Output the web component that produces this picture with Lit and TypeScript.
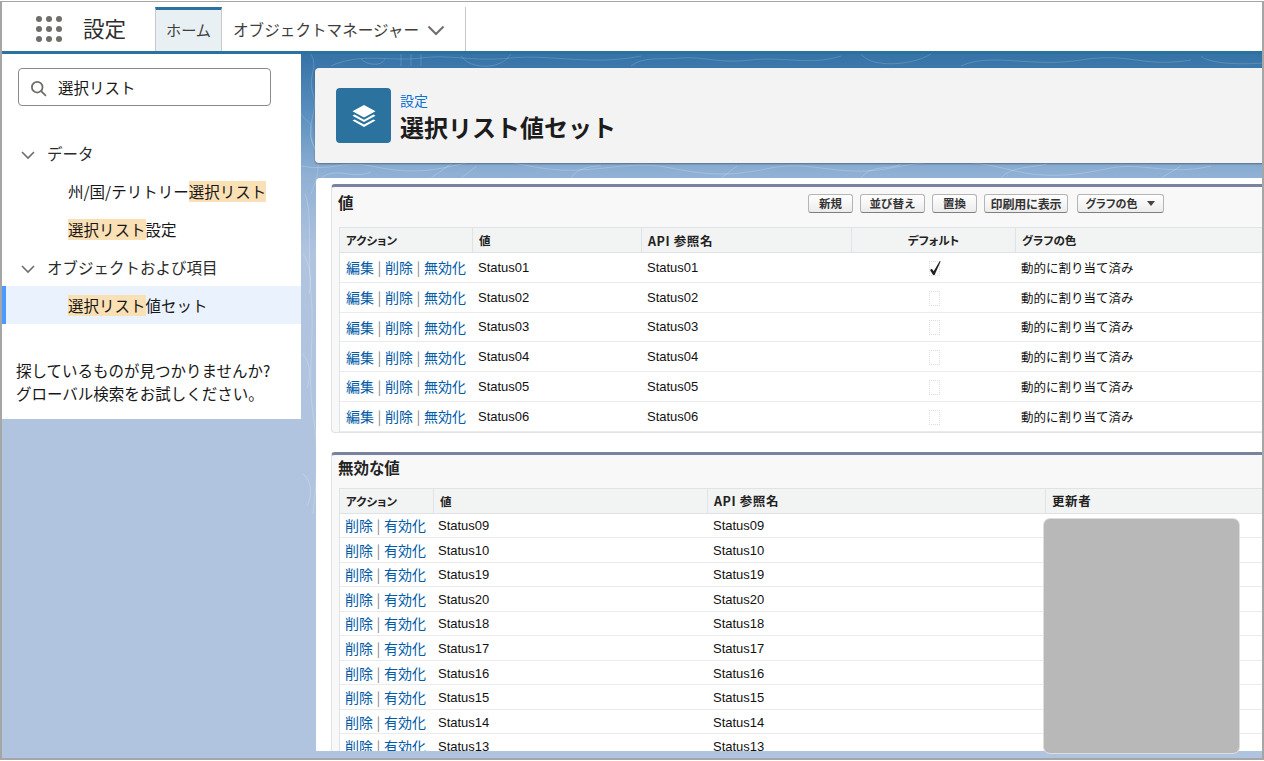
import { LitElement, html, css, svg } from "lit";
import { customElement } from "lit/decorators.js";

const active = ["Status01", "Status02", "Status03", "Status04", "Status05", "Status06"];
const inactive = ["Status09", "Status10", "Status19", "Status20", "Status18", "Status17", "Status16", "Status15", "Status14", "Status13"];

const chev = html`<svg class="chev" viewBox="0 0 16 10" aria-hidden="true"><path d="M2 2l6 6 6-6" fill="none" stroke="currentColor" stroke-width="1.6"/></svg>`;

const topo = svg`
  <g fill="none" stroke="#fff" stroke-opacity=".16" stroke-width="1">
    <path d="M10 0c8 14-4 22 2 40s-8 30 0 50 6 30-2 50"/>
    <path d="M30 12c30-14 60-4 90-8s50 4 90 0 80 8 130-2"/>
    <path d="M60 5c6 6 20 8 24 0M100 0v12M110 0v12M120 0v12M160 2c10 14 40 14 50-2"/>
    <path d="M330 12c12-10 30-6 50-8s40 6 70 2 60 6 90-4"/>
    <path d="M560 0c10 14 50 12 70 0M660 12c30-14 70 2 120-6s60 8 110 0"/>
    <path d="M900 2c10 10 60 10 100 2"/>
    <path d="M0 60c6 10 12 6 10 18s8 16 4 28"/>
  </g>
  <g fill="none" stroke="#fff" stroke-opacity=".2" stroke-width="1">
    <path d="M0 112c30 6 40-6 70 0s50 8 90-2 60 4 100 6 70-10 110-2 60 8 100 0 70 10 120 0 80-8 120 2 70 4 100-2 60 8 100-2"/>
    <path d="M20 124c16-12 30 2 50-6M130 124l20-14M160 124l16-12M270 124c6-10 20-12 30-12M420 124l16-12M560 124c10-14 30-8 40-14M700 124c10-12 30-10 46-14M860 124l20-12"/>
    <path d="M4 140c8 20 2 60 6 100s-4 80 2 120 4 60 0 100"/>
    <path d="M2 200c6 8 10 24 6 40M2 300c8 10 8 22 4 34M2 420c8 6 10 20 4 32"/>
  </g>`;

@customElement("app-root")
export class AppRoot extends LitElement {
  static styles = css`
    :host {
      display: block;
      height: 761px;
      padding-top: 1px;
      box-sizing: border-box;
      background: #fff;
      overflow: hidden;
      font-family: "Noto Sans CJK JP", "Liberation Sans", sans-serif;
      color: #181818;
    }
    .frame {
      height: 759px;
      box-sizing: border-box;
      border: solid #a6a6a6;
      border-width: 1px 2px 2px 2px;
      display: flex;
      flex-direction: column;
      overflow: hidden;
      background: #b0c4df;
    }
    .top {
      height: 52px;
      flex: none;
      box-sizing: border-box;
      background: #fff;
      padding-top: 5px;
      border-bottom: 3px solid #2b729f;
      display: flex;
      align-items: stretch;
    }
    .waffle {
      width: 26px;
      height: 26px;
      margin: 9px 0 0 34px;
      display: grid;
      grid-template-columns: repeat(3, 6px);
      grid-auto-rows: 6px;
      gap: 4px;
      flex: none;
    }
    .waffle i { background: #706e6b; border-radius: 50%; }
    .app {
      font-size: 21.5px;
      line-height: 30px;
      margin: 6px 0 0 21px;
      width: 72px;
      color: #2e2e2e;
    }
    .tab {
      font-size: 15.2px;
      color: #3e3e3c;
      display: flex;
      align-items: center;
      box-sizing: border-box;
      border-right: 1px solid #c9c9c9;
    }
    .tab.home {
      width: 67px;
      justify-content: center;
      background: #e9f0f3;
      border-top: 3px solid #2b729f;
      border-left: 1px solid #c9c9c9;
      padding-bottom: 4px;
    }
    .tab.om {
      width: 244px;
      padding-left: 11px;
      font-size: 15.6px;
      gap: 7px;
    }
    .tab .chev { width: 20px; height: 12.5px; color: #706e6b; margin-top: 3px; }
    .body { flex: 1; min-height: 0; display: flex; position: relative; }
    .wall {
      position: absolute;
      inset: 0;
      background: linear-gradient(#3572a6 0, #5a8fbf 60px, #8fb0d4 120px, #b0c4df 200px);
    }
    .wall svg { position: absolute; left: 299px; top: 0; width: 1000px; height: 700px; }
    .side {
      position: relative;
      width: 299px;
      height: 365px;
      flex: none;
      box-sizing: border-box;
      background: #fff;
      padding-top: 14px;
      font-size: 15.5px;
    }
    .search {
      margin-left: 16px;
      width: 253px;
      height: 38px;
      box-sizing: border-box;
      border: 1px solid #8a8a8a;
      border-radius: 4px;
      display: flex;
      align-items: center;
      gap: 11px;
      padding-left: 11px;
    }
    .search svg { width: 17px; height: 17px; color: #706e6b; flex: none; margin-top: 3px; }
    .nav { margin-top: 28px; }
    .row {
      height: 38px;
      display: flex;
      align-items: center;
      white-space: nowrap;
      box-sizing: border-box;
    }
    .group { padding-left: 18px; gap: 11px; color: #2b2b2b; }
    .group .chev { width: 16px; height: 10px; color: #706e6b; margin-top: 3px; }
    .leaf { padding-left: 66px; }
    .leaf.on { background: #eaf3fd; border-left: 4px solid #4b9aff; padding-left: 62px; }
    mark { display: inline-block; background: #fae0b5; color: inherit; line-height: 21px; }
    .help { margin: 35px 0 0 14px; line-height: 23px; white-space: nowrap; font-size: 15.5px; }
    .main {
      position: relative;
      flex: 1;
      min-width: 0;
      padding: 14px 0 7px 14px;
      display: flex;
      flex-direction: column;
      gap: 15px;
      overflow: hidden;
    }
    .hero {
      height: 95px;
      flex: none;
      margin-right: -12px;
      box-sizing: border-box;
      background: #f3f3f3;
      border-radius: 4px;
      box-shadow: 0 1px 2px rgba(0, 0, 0, .35);
      display: flex;
      align-items: center;
      gap: 9px;
      padding-left: 21px;
    }
    .badge {
      width: 55px;
      height: 55px;
      background: #2b729f;
      border-radius: 4px;
      display: flex;
      align-items: center;
      justify-content: center;
    }
    .badge svg { width: 26px; height: 24px; }
    .herotext { padding-top: 6px; }
    .crumb { font-size: 14px; line-height: 18px; color: #0b72d4; }
    .title { font-size: 24px; font-weight: 700; line-height: 36px; color: #1c1c1c; white-space: nowrap; margin-bottom: 1px; }
    .sheet {
      flex: 1;
      min-height: 0;
      margin-left: 1px;
      background: #fff;
      border-radius: 4px 0 0 0;
      padding: 6px 0 0 15px;
      display: flex;
      flex-direction: column;
      gap: 19px;
      overflow: hidden;
    }
    .block {
      flex: none;
      background: #f8f8f8;
      border: solid #e0e3e5;
      border-width: 3px 0 1px 1px;
      border-top-color: #7a829f;
      border-radius: 4px 0 0 4px;
      padding: 0 0 0 7px;
    }
    .block.b2 { border-bottom: 0; }
    .head { height: 40px; display: flex; align-items: flex-start; }
    .b2 .head { height: 33px; }
    h3 {
      margin: 3px 0 0 -1px;
      font-size: 15.5px;
      line-height: 24px;
      font-weight: 700;
      width: 470px;
      flex: none;
      color: #222;
      font-feature-settings: "palt";
    }
    .b2 h3 { width: auto; margin-top: 0; }
    .btns { display: flex; margin-top: 7px; gap: 7px; }
    .btn {
      height: 19px;
      box-sizing: border-box;
      border: 1px solid #b5b5b5;
      border-bottom-color: #7f7f7f;
      border-radius: 3px;
      background: linear-gradient(#fff, #ececec);
      font-size: 11.5px;
      font-weight: 700;
      line-height: 17px;
      text-align: center;
      color: #333;
      white-space: nowrap;
    }
    .b1 { width: 45px; }
    .b2w { width: 65px; }
    .b3 { width: 84px; font-size: 12px; letter-spacing: -.2px; }
    .b4 {
      width: 87px;
      margin-left: 2px;
      display: flex;
      align-items: center;
      justify-content: center;
      gap: 10px;
      font-feature-settings: "palt";
      font-size: 11px;
    }
    .tri { width: 0; height: 0; border: solid transparent; border-width: 5px 4px 0; border-top-color: #444; }
    .table { background: #fff; border: solid #e0e3e5; border-width: 1px 0 0 1px; }
    .tr { display: grid; box-sizing: border-box; border-bottom: 1px solid #e9ebed; align-items: center; }
    .t1 .tr { grid-template-columns: 133px 169px 210px 164px 1fr; height: 29.75px; }
    .t2 .tr { grid-template-columns: 94px 274px 338px 1fr; height: 24.55px; }
    .t1 .tr.th, .t2 .tr.th {
      background: #f2f3f3;
      height: 25px;
      border-bottom: 1px solid #e0e3e5;
      font-size: 11.5px;
      font-weight: 700;
      color: #222;
      font-feature-settings: "palt";
      align-items: stretch;
    }
    .th > div {
      display: flex;
      align-items: center;
      padding-left: 6px;
      border-right: 1px solid #e0e3e5;
      white-space: nowrap;
    }
    .th > div.wide { font-size: 12.5px; letter-spacing: .6px; }
    .th > div.ctr { justify-content: center; padding: 0; }
    .th > div:last-child { border-right: 0; }
    .td {
      padding-left: 5px;
      font-family: "Liberation Sans", "Noto Sans CJK JP", sans-serif;
      font-size: 13px;
      color: #111;
      white-space: nowrap;
    }
    .t2 .td { padding-left: 4px; margin-top: 1px; }
    .t2 .td.api { padding-left: 5px; }
    .t1 .td.act, .t2 .td.act {
      padding-left: 6px;
      margin-top: 0;
      font-family: "Noto Sans CJK JP", sans-serif;
      font-size: 14px;
      color: #888;
      overflow: hidden;
      display: flex;
    }
    .t2 .td.act { padding-left: 5px; }
    .sep { width: 11px; text-align: center; }
    a { color: #015ba7; text-decoration: none; }
    .jp { font-family: "Noto Sans CJK JP", sans-serif; font-size: 12.5px; }
    .td.cb { display: flex; justify-content: center; padding: 0; }
    .box {
      width: 11px;
      height: 15px;
      border: 1px dotted #dcdcdc;
      box-sizing: border-box;
      position: relative;
      top: 1px;
    }
    .box svg { position: absolute; left: 0; top: -1px; width: 11px; height: 15px; }
    .redact {
      position: absolute;
      left: 743px;
      top: 465px;
      width: 195px;
      height: 234px;
      background: #b8b8b8;
      border-radius: 6px;
      box-shadow: 0 0 0 1px #ddd;
    }
  `;

  render() {
    return html`
      <div class="frame">
        <header class="top">
          <div class="waffle">${Array.from({ length: 9 }, () => html`<i></i>`)}</div>
          <div class="app">設定</div>
          <div class="tab home">ホーム</div>
          <div class="tab om">オブジェクトマネージャー ${chev}</div>
        </header>
        <div class="body">
          <div class="wall"><svg viewBox="0 0 1000 700" fill="none">${topo}</svg></div>
          <aside class="side">
            <div class="search">
              <svg viewBox="0 0 16 16" fill="none" stroke="currentColor" stroke-width="1.7"><circle cx="6.8" cy="6.8" r="5"/><path d="M10.5 10.5L15 15"/></svg>
              <span>選択リスト</span>
            </div>
            <nav class="nav">
              <div class="row group">${chev}<span>データ</span></div>
              <div class="row leaf"><span>州/国/テリトリー<mark>選択リスト</mark></span></div>
              <div class="row leaf"><span><mark>選択リスト</mark>設定</span></div>
              <div class="row group">${chev}<span>オブジェクトおよび項目</span></div>
              <div class="row leaf on"><span><mark>選択リスト</mark>値セット</span></div>
            </nav>
            <div class="help">探しているものが見つかりませんか?<br />グローバル検索をお試しください。</div>
          </aside>
          <main class="main">
            <section class="hero">
              <div class="badge">
                <svg viewBox="0 0 26 24" fill="#fff">
                  <path d="M13 1l11.5 6.2L13 13.4 1.5 7.2z"/>
                  <path d="M3.6 10.6L13 15.7l9.4-5.1 2.1 1.2L13 18 1.5 11.8z"/>
                  <path d="M3.6 15.4L13 20.5l9.4-5.1 2.1 1.2L13 23 1.5 16.6z"/>
                </svg>
              </div>
              <div class="herotext">
                <div class="crumb">設定</div>
                <div class="title">選択リスト値セット</div>
              </div>
            </section>
            <section class="sheet">
              <div class="block">
                <div class="head">
                  <h3>値</h3>
                  <div class="btns">
                    <div class="btn b1">新規</div>
                    <div class="btn b2w">並び替え</div>
                    <div class="btn b1">置換</div>
                    <div class="btn b3">印刷用に表示</div>
                    <div class="btn b4"><span>グラフの色</span><span class="tri"></span></div>
                  </div>
                </div>
                <div class="table t1">
                  <div class="tr th">
                    <div>アクション</div><div>値</div><div class="wide">API 参照名</div><div class="ctr">デフォルト</div><div>グラフの色</div>
                  </div>
                  ${active.map(
                    (s, i) => html`<div class="tr">
                      <div class="td act"><a>編集</a><span class="sep">|</span><a>削除</a><span class="sep">|</span><a>無効化</a></div>
                      <div class="td">${s}</div>
                      <div class="td">${s}</div>
                      <div class="td cb"><div class="box">${i === 0
                        ? html`<svg viewBox="0 0 12 16"><path d="M0 9.5l2-1.2 2 2.6L10.5 0h1.2L5 15H3.4z" fill="#222"/></svg>`
                        : ""}</div></div>
                      <div class="td jp">動的に割り当て済み</div>
                    </div>`
                  )}
                </div>
              </div>
              <div class="block b2">
                <div class="head"><h3>無効な値</h3></div>
                <div class="table t2">
                  <div class="tr th">
                    <div>アクション</div><div>値</div><div class="wide">API 参照名</div><div class="wide">更新者</div>
                  </div>
                  ${inactive.map(
                    (s) => html`<div class="tr">
                      <div class="td act"><a>削除</a><span class="sep">|</span><a>有効化</a></div>
                      <div class="td">${s}</div>
                      <div class="td api">${s}</div>
                      <div></div>
                    </div>`
                  )}
                </div>
              </div>
            </section>
            <div class="redact"></div>
          </main>
        </div>
      </div>
    `;
  }
}
